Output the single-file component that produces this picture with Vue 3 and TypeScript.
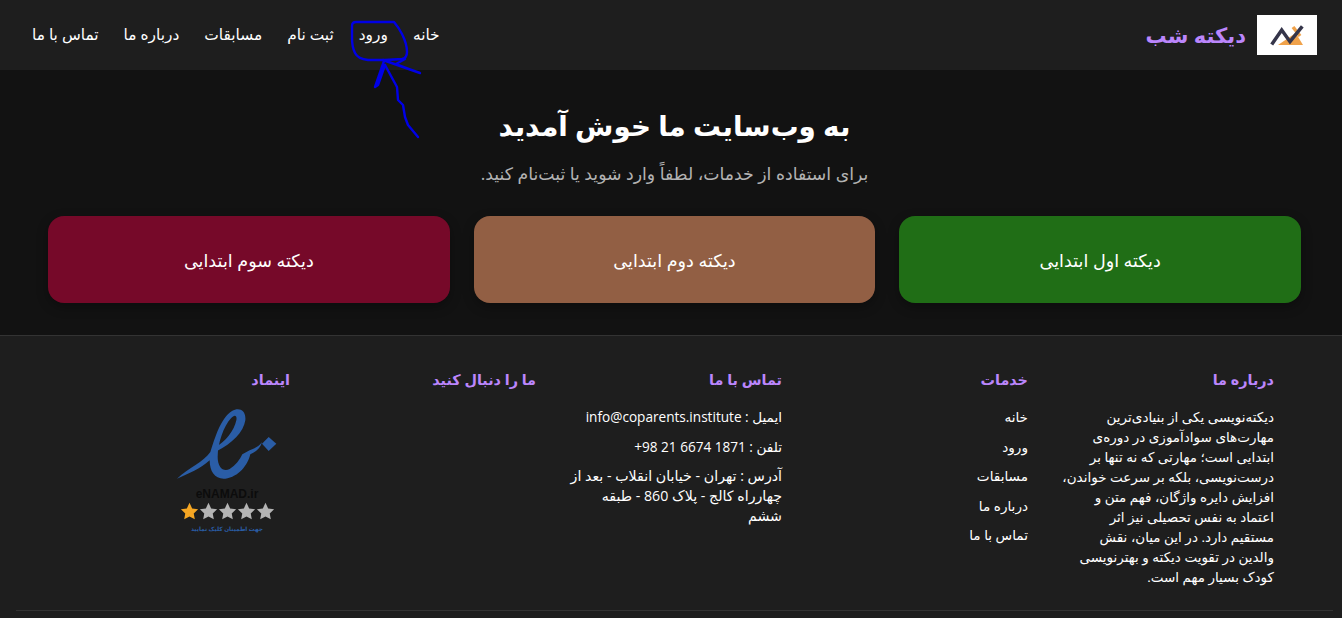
<template>
  <div class="page" dir="rtl">
    <header class="nav">
      <div class="brand">
        <div class="brand__logo">
          <svg width="60" height="40" viewBox="0 0 60 40">
            <path d="M21 30 L46 30 L38.7 18 Z" fill="#f0a24a" />
            <path d="M36 12 L43 21" fill="none" stroke="#f0a24a" stroke-width="3.5" />
            <path d="M14.7 29.5 L24.7 15 L33 26.7 L45.3 11.3" fill="none" stroke="#35354a" stroke-width="3.5" />
          </svg>
        </div>
        <span class="brand__name">دیکته شب</span>
      </div>
      <nav class="nav__links">
        <a v-for="l in links" :key="l">{{ l }}</a>
      </nav>
    </header>

    <main class="hero">
      <h1>به وب‌سایت ما خوش آمدید</h1>
      <p>برای استفاده از خدمات، لطفاً وارد شوید یا ثبت‌نام کنید.</p>
      <div class="cards">
        <div v-for="c in cards" :key="c.label" class="card" :class="c.cls">{{ c.label }}</div>
      </div>
    </main>

    <footer class="foot">
      <div class="foot__grid">
        <section>
          <h3>درباره ما</h3>
          <p class="about">دیکته‌نویسی یکی از بنیادی‌ترین مهارت‌های سوادآموزی در دوره‌ی ابتدایی است؛ مهارتی که نه تنها بر درست‌نویسی، بلکه بر سرعت خواندن، افزایش دایره واژگان، فهم متن و اعتماد به نفس تحصیلی نیز اثر<br />مستقیم دارد. در این میان، نقش<br />والدین در تقویت دیکته و بهترنویسی<br />کودک بسیار مهم است.</p>
        </section>
        <section>
          <h3>خدمات</h3>
          <ul>
            <li v-for="s in services" :key="s">{{ s }}</li>
          </ul>
        </section>
        <section>
          <h3>تماس با ما</h3>
          <p class="contact">ایمیل : info@coparents.institute</p>
          <p class="contact">تلفن : <span dir="ltr">+98 21 6674 1871</span></p>
          <p class="contact contact--addr">آدرس : تهران - خیابان انقلاب - بعد از چهارراه کالج - پلاک 860 - طبقه ششم</p>
        </section>
        <section>
          <h3>ما را دنبال کنید</h3>
        </section>
        <section>
          <h3>اینماد</h3>
          <div class="enamad">
            <svg width="100" height="74" viewBox="50 40 300 222">
              <path d="M50 255 C85 222 130 205 150 175 C165 130 180 75 215 52 C235 40 258 48 255 80 C250 115 215 150 170 172 L166 160 C195 145 222 110 228 80 C231 64 222 62 212 74 C190 97 172 150 172 190 C172 222 190 236 208 226 C225 216 238 200 246 182 L268 170 C280 165 295 160 305 145 C300 165 285 175 270 182 C262 215 235 250 195 255 C165 258 148 235 148 200 C120 225 85 240 50 255 Z" fill="#2a5da6" />
              <path d="M325 130 L348 150 L325 172 L305 150 Z" fill="#2a5da6" />
            </svg>
            <span class="enamad__name">eNAMAD.ir</span>
            <div class="enamad__stars">
              <svg v-for="n in 5" :key="n" width="19" height="18" viewBox="0 0 24 23">
                <path d="M12 1 L15.4 8.2 L23 9.2 L17.4 14.6 L18.8 22 L12 18.4 L5.2 22 L6.6 14.6 L1 9.2 L8.6 8.2 Z" :fill="n === 1 ? '#f5a623' : '#b4b4b4'" />
              </svg>
            </div>
            <span class="enamad__hint">جهت اطمینان کلیک نمایید</span>
          </div>
        </section>
      </div>
      <div class="foot__line"></div>
    </footer>

    <!-- hand drawn marker around the login link -->
    <svg class="marker" width="1342" height="618" viewBox="0 0 1342 618">
      <path d="M356 22 L394 22 Q399 28 402 34 Q407 44 407 52 Q407 58 402 59 L385 60 L368 60 Q358 59 355 53 Q352 47 352 38 L352 26 Q352 22 356 22 Z" />
      <path d="M384 61 L375 87 L378 85 L385 65" />
      <path d="M383 60 L420 73 L396 64 L405 59" />
      <path d="M385 65 L397 87 L398 100 L403 105 L405 117 L408 125 L418 137" />
    </svg>
  </div>
</template>

<script setup lang="ts">
const links: string[] = ['خانه', 'ورود', 'ثبت نام', 'مسابقات', 'درباره ما', 'تماس با ما']
const services: string[] = ['خانه', 'ورود', 'مسابقات', 'درباره ما', 'تماس با ما']
const cards = [
  { label: 'دیکته اول ابتدایی', cls: 'card--green' },
  { label: 'دیکته دوم ابتدایی', cls: 'card--brown' },
  { label: 'دیکته سوم ابتدایی', cls: 'card--red' }
]
</script>

<style scoped>
.page { position: relative; height: 618px; overflow: hidden; background: #121212; color: #fff; font-family: "Open Sans", "DejaVu Sans", sans-serif; font-size: 14px; }

.nav { height: 70px; box-sizing: border-box; display: flex; align-items: center; justify-content: space-between; padding: 0 25px 0 32px; background: #1e1e1e; }
.brand { display: flex; align-items: center; gap: 11px; }
.brand__logo { width: 60px; height: 40px; background: #fff; display: flex; }
.brand__name { color: #bb86fc; font-size: 21px; font-weight: 700; }
.nav__links { display: flex; gap: 25px; margin-top: -1px; }
.nav__links a { color: #fff; font-size: 15.4px; }

.hero { height: 265px; box-sizing: border-box; padding: 34px 41px 0 48px; text-align: center; }
.hero h1 { margin: 0; font-size: 27.8px; line-height: 42px; font-weight: 700; }
.hero p { margin: 16px 0 0; font-size: 17.3px; line-height: 24px; color: #b3b3b3; }
.cards { display: grid; grid-template-columns: repeat(3, 1fr); gap: 24px; margin-top: 30px; }
.card { height: 87px; border-radius: 16px; display: flex; align-items: center; justify-content: center; font-size: 17.6px; box-shadow: 0 4px 12px rgba(0,0,0,.3); }
.card--green { background: #206e16; }
.card--brown { background: #925f44; }
.card--red { background: #760929; }

.foot { background: #1e1e1e; border-top: 1px solid #333; height: 283px; box-sizing: border-box; }
.foot__grid { height: 274px; box-sizing: border-box; display: grid; grid-template-columns: repeat(5, 1fr); gap: 32px; padding: 32px 68px 0 76px; }
.foot h3 { margin: 0 0 15px; color: #bb86fc; font-size: 14.4px; line-height: 24px; font-weight: 700; }
.about { margin: 0; font-size: 13.5px; line-height: 20px; }
.foot ul { margin: 0; padding: 0; list-style: none; }
.foot li { font-size: 13.6px; line-height: 20px; margin-bottom: 9.5px; }
.contact { margin: 0 0 9.5px; font-size: 13.6px; line-height: 20px; }
.contact--addr { font-size: 14.2px; }
.enamad { width: 100px; margin-right: 13px; display: flex; flex-direction: column; align-items: center; }
.enamad__name { font-family: "Liberation Sans", sans-serif; font-size: 12px; font-weight: 700; color: #0c0c0c; line-height: 12px; margin-top: 7px; }
.enamad__stars { display: flex; flex-direction: row-reverse; margin-top: 2px; }
.enamad__hint { font-size: 5.8px; font-weight: 700; color: #2a5da6; line-height: 10px; margin-top: 4px; }
.foot__line { height: 1px; background: #333; margin: 0 9px 0 16px; }

.marker { position: absolute; top: 0; left: 0; pointer-events: none; }
.marker path { fill: none; stroke: #0000e6; stroke-width: 2.4; stroke-linejoin: round; stroke-linecap: round; }
</style>

<style>
html, body { background: #121212; }
</style>
